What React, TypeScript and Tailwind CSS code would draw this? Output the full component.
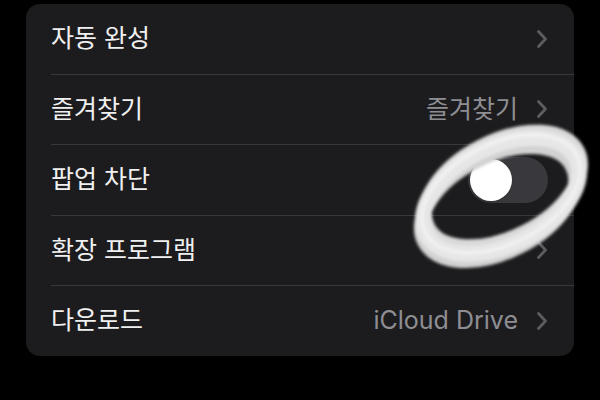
function Chevron() {
  return (
    <svg width="12" height="20" viewBox="0 0 12 20" fill="none">
      <path
        d="M2.5 2.5 L9.5 10 L2.5 17.5"
        stroke="#5c5c61"
        strokeWidth="2.8"
        strokeLinecap="round"
        strokeLinejoin="round"
      />
    </svg>
  );
}

function Toggle() {
  return (
    <div className="w-[80px] h-[46px] rounded-full bg-[#39393d] p-[2px] flex items-center">
      <div className="w-[42px] h-[42px] rounded-full bg-white shadow" />
    </div>
  );
}

type RowProps = {
  label: string;
  value?: string;
  toggle?: boolean;
  last?: boolean;
};

function Row({ label, value, toggle = false, last = false }: RowProps) {
  return (
    <>
      <div className="h-[69.5px] flex items-center pl-[25px] pr-[26px]">
        <span className="flex-1 text-[25px] text-[#f0f0f0]">{label}</span>
        {toggle ? (
          <Toggle />
        ) : (
          <div className="flex items-center gap-[18px]">
            {value && <span className="text-[25px] text-[#8e8e93]">{value}</span>}
            <Chevron />
          </div>
        )}
      </div>
      {!last && <div className="ml-[25px] h-px bg-[#38383a]" />}
    </>
  );
}

export default function App() {
  return (
    <div
      className="relative w-[600px] h-[400px] bg-black overflow-hidden pt-[4px]"
      style={{ fontFamily: "Inter, 'Noto Sans CJK KR', sans-serif" }}
    >
      <div className="ml-[26px] w-[548px] rounded-[14px] bg-[#1c1c1e] flex flex-col">
        <Row label="자동 완성" />
        <Row label="즐겨찾기" value="즐겨찾기" />
        <Row label="팝업 차단" toggle />
        <Row label="확장 프로그램" />
        <Row label="다운로드" value="iCloud Drive" last />
      </div>

      {/* hand-drawn ring highlight around the toggle */}
      <svg className="absolute inset-0 pointer-events-none" width="600" height="400">
        <defs>
          <filter id="soft" x="-20%" y="-20%" width="140%" height="140%">
            <feGaussianBlur stdDeviation="1.6" />
          </filter>
        </defs>
        <g filter="url(#soft)" fill="none">
          <ellipse cx="503" cy="189" rx="84" ry="48" transform="rotate(-27 503 189)" stroke="#d9d9d9" strokeWidth="14" />
          <ellipse cx="498" cy="204" rx="83" ry="48" transform="rotate(-27 498 204)" stroke="#d2d2d2" strokeWidth="14" />
          <ellipse cx="501" cy="196" rx="84" ry="49" transform="rotate(-27 501 196)" stroke="#e6e6e6" strokeWidth="16" />
          <ellipse cx="501" cy="194" rx="85" ry="50" transform="rotate(-27 501 194)" stroke="#f4f4f4" strokeWidth="4" opacity="0.8" />
        </g>
      </svg>
    </div>
  );
}
